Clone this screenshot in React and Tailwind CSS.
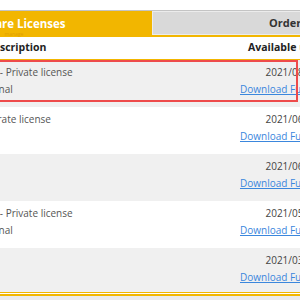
import React from 'react';

const rows = [
    { line1: 'Home - Private license', line2: 'Personal', date: '2021/08/15', bg: 'bg-[#f0f0f0]' },
    { line1: 'Corporate license', line2: '', date: '2021/06/22', bg: 'bg-white' },
    { line1: '', line2: '', date: '2021/06/03', bg: 'bg-[#f0f0f0]' },
    { line1: 'Home - Private license', line2: 'Personal', date: '2021/05/19', bg: 'bg-white' },
    { line1: '', line2: '', date: '2021/03/30', bg: 'bg-[#f0f0f0]' },
];

export default function App() {
    return (
        <div className="relative w-[300px] h-[300px] overflow-hidden bg-[#ebebeb] font-['Open_Sans',sans-serif]">
            {/* page is wider than the crop */}
            <div className="w-[600px] -ml-[149px]">
                <div className="h-[11px] bg-white border-b border-[#c4c4c4]" />

                <div className="flex h-[26px] border-b-2 border-[#f2b600]">
                    <div className="w-[300px] bg-[#f2b600] flex flex-col items-center pt-[4px] pl-[26px]">
                        <span className="text-white font-bold text-[11.5px] leading-[17px] whitespace-nowrap">Software Licenses</span>
                        <span className="text-[#e09f00] text-[5px] leading-[5px] whitespace-nowrap">manage</span>
                    </div>
                    <div className="flex-1 bg-[#d9d9d9] border-l border-[#f2b600] shadow-[inset_0_0_0_1px_#ececec] flex items-center justify-center pl-[10px]">
                        <span className="text-[#333] font-bold text-[11px] whitespace-nowrap">Order History</span>
                    </div>
                </div>

                <div className="flex h-[23px] items-center bg-white border-b border-[#f2b600] text-[10.5px] font-bold text-[#222]">
                    <div className="w-[381px] pl-[135px] whitespace-nowrap">Description</div>
                    <div className="w-[108px] text-center whitespace-nowrap">Available until</div>
                </div>

                {rows.map((r, i) => (
                    <div key={i} className={`flex ${i === 4 ? 'h-[44px]' : 'h-[47px]'} ${r.bg} pt-[4px] text-[10px] leading-[17px]`}>
                        <div className="w-[381px] pl-[118px] text-[#555] whitespace-nowrap">
                            <div>{r.line1 || '\u00a0'}</div>
                            <div className="ml-[3px]">{r.line2}</div>
                        </div>
                        <div className="w-[120px] flex flex-col items-center whitespace-nowrap">
                            <span className="text-[#444]">{r.date}</span>
                            <a href="#" className="text-[#3b87dd] underline">Download Full Version</a>
                        </div>
                    </div>
                ))}

                <div className="h-[1px] bg-[#f2b600]" />
                <div className="h-[1px] bg-white" />
                <div className="h-[2px] bg-[#f2b600]" />
            </div>

            {/* highlight around first row */}
            <div className="absolute top-[60px] -left-[10px] w-[308px] h-[42px] border-2 border-[#ee4b4b]" />
        </div>
    );
}
